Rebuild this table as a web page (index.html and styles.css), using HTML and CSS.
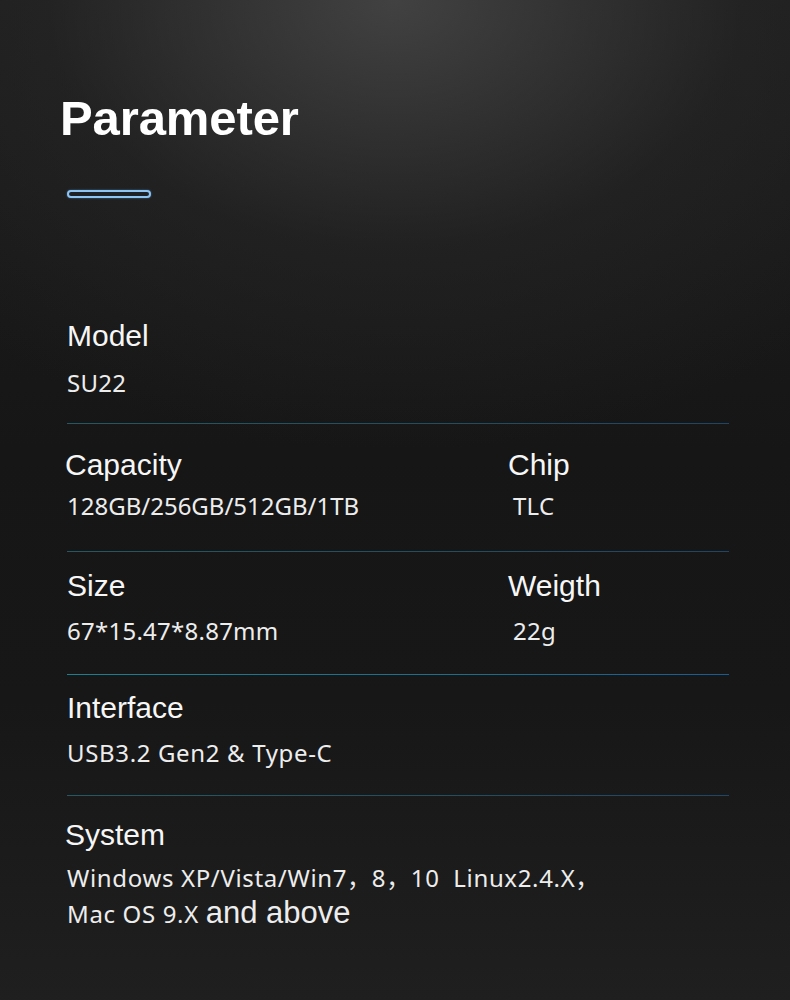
FILE: index.html
```html
<!DOCTYPE html>
<html lang="en">
<head>
<meta charset="utf-8">
<title>Parameter</title>
<link rel="stylesheet" href="styles.css">
</head>
<body>
<main class="page">
  <h1 class="title">Parameter</h1>
  <div class="title-bar"></div>
  <section class="params">
    <div class="row row-model">
      <div class="cell">
        <div class="label">Model</div>
        <div class="value">SU22</div>
      </div>
    </div>
    <div class="row row-capacity">
      <div class="cell cell-left">
        <div class="label label-flush">Capacity</div>
        <div class="value value-tight">128GB/256GB/512GB/1TB</div>
      </div>
      <div class="cell cell-right">
        <div class="label">Chip</div>
        <div class="value">TLC</div>
      </div>
    </div>
    <div class="row row-size row-accent">
      <div class="cell cell-left">
        <div class="label">Size</div>
        <div class="value">67*15.47*8.87mm</div>
      </div>
      <div class="cell cell-right">
        <div class="label">Weigth</div>
        <div class="value">22g</div>
      </div>
    </div>
    <div class="row row-interface">
      <div class="cell">
        <div class="label">Interface</div>
        <div class="value value-wide">USB3.2 Gen2 &amp; Type-C</div>
      </div>
    </div>
    <div class="row row-system">
      <div class="cell">
        <div class="label label-flush">System</div>
        <div class="value value-wide value-multi">Windows XP/Vista/Win7，8，10&nbsp; Linux2.4.X，<br>Mac OS 9.X <span class="value-alt">and above</span></div>
      </div>
    </div>
  </section>
</main>
</body>
</html>
```

FILE: styles.css
```css
html, body {
  margin: 0;
  padding: 0;
}

body {
  min-height: 1000px;
  background:
    radial-gradient(ellipse 80% 45% at 50% 0%, rgba(72, 72, 72, 0.85) 0%, rgba(42, 42, 42, 0.45) 55%, rgba(20, 20, 20, 0) 100%),
    linear-gradient(180deg, #1d1d1d 0%, #161616 45%, #171717 70%, #1f1f1f 100%);
  color: #f4f4f4;
  font-family: "Liberation Sans", Arial, sans-serif;
}

.page {
  width: 790px;
  height: 1000px;
  box-sizing: border-box;
  padding: 90px 61px 0 67px;
}

.title {
  margin: 0 0 0 -7px;
  font-family: "Liberation Sans", Arial, sans-serif;
  font-weight: 700;
  font-size: 49px;
  line-height: 56px;
  color: #ffffff;
  letter-spacing: -0.1px;
}

.title-bar {
  margin-top: 44px;
  width: 84px;
  height: 8px;
  box-sizing: border-box;
  border: 2px solid #8cc4f4;
  border-radius: 5px;
  background: #1e2226;
  box-shadow: 0 0 2px rgba(100, 170, 240, 0.6);
}

.params {
  margin-top: 102px;
}

.row {
  display: flex;
  padding: 20px 0 26px;
  border-bottom: 1px solid transparent;
  border-image: linear-gradient(90deg, rgba(40, 110, 124, 0.75) 0%, rgba(38, 96, 120, 0.75) 60%, rgba(34, 84, 130, 0.75) 100%) 1;
}

.row-accent {
  border-image: linear-gradient(90deg, #1d7f90 0%, #1b6d8c 60%, #1a5b94 100%) 1;
}

.row-model { padding: 19px 0 24px; }
.row-model .cell { gap: 14px; }

.row-capacity { padding: 24px 0 29px; }
.row-capacity .cell { gap: 8px; }

.row-size { padding: 17px 0 27px; }
.row-size .cell { gap: 12px; }

.row-interface { padding: 16px 0 26px; }
.row-interface .cell { gap: 12px; }

.row-system {
  padding: 22px 0 0;
  border-bottom: none;
  border-image: none;
}
.row-system .cell { gap: 8px; }

.cell {
  display: flex;
  flex-direction: column;
  gap: 11px;
}

.cell-left {
  width: 441px;
}

.cell-right .value {
  padding-left: 5px;
}

.label {
  font-family: "Liberation Sans", Arial, sans-serif;
  font-size: 30px;
  line-height: 34px;
  color: #f6f6f6;
}

.label-flush {
  margin-left: -2px;
}

.value {
  font-family: "Noto Sans", "Noto Sans CJK SC", sans-serif;
  font-size: 24px;
  line-height: 32px;
  letter-spacing: 0.25px;
  color: #ededed;
}

.value-tight {
  letter-spacing: 0;
}

.value-wide {
  letter-spacing: 0.65px;
}

.value-multi {
  line-height: 35px;
}

.value-alt {
  font-family: "Liberation Sans", Arial, sans-serif;
  font-size: 31px;
  letter-spacing: 0;
}
```
